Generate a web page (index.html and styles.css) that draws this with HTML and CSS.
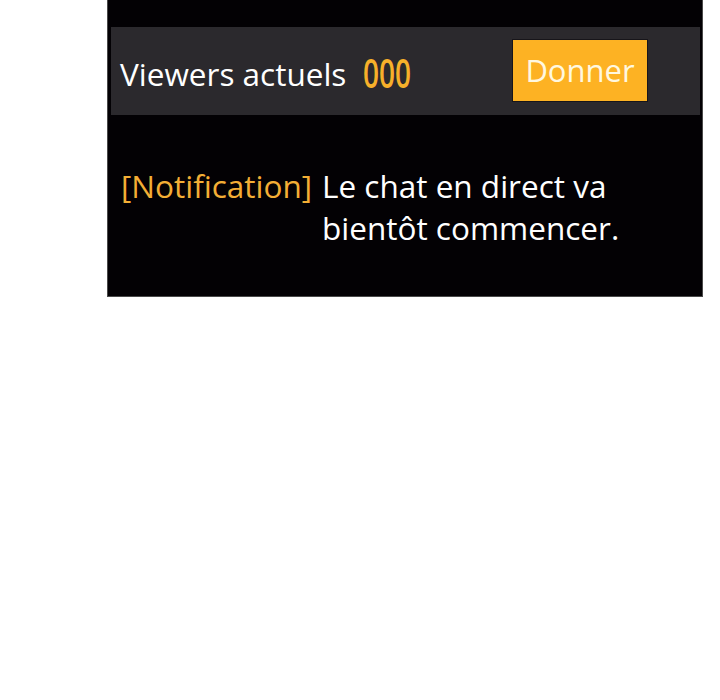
FILE: index.html
```html
<!DOCTYPE html>
<html lang="fr">
<head>
    <meta charset="UTF-8">
    <meta name="viewport" content="width=device-width, initial-scale=1.0">
    <title>Live chat</title>
    <link rel="stylesheet" href="styles.css">
</head>
<body>
    <div class="chat-panel">
        <div class="viewer-bar">
            <div class="viewer-info">
                <span class="viewer-label">Viewers actuels</span>
                <span class="viewer-count">000</span>
            </div>
            <button class="donate-btn">Donner</button>
        </div>

        <div class="notice">
            <span class="notice-tag">[Notification]</span>
            <span class="notice-text">Le chat en direct va bientôt commencer.</span>
        </div>
    </div>
</body>
</html>
```

FILE: styles.css
```css
body {
    margin: 0;
    background-color: #fff;
    font-family: 'Open Sans', 'Noto Sans', sans-serif;
}

.chat-panel {
    width: 594px;
    margin-left: 107px;
    padding: 27px 0 47px;
    background-color: #030104;
    border: 1px solid #4a4a4a;
    border-top: none;
}

.viewer-bar {
    display: flex;
    align-items: center;
    justify-content: space-between;
    height: 88px;
    margin: 0 2px 0 3px;
    padding: 0 52px 0 9px;
    background-color: #2b292d;
}

.viewer-info {
    display: flex;
    align-items: center;
    padding-top: 4px;
}

.viewer-label {
    color: #fff;
    font-size: 31.5px;
}

.viewer-count {
    display: inline-block;
    margin-left: 17px;
    color: #f7b02a;
    font-size: 40px;
    font-weight: 600;
    line-height: 1;
    transform: scaleX(0.7);
    transform-origin: left center;
}

.donate-btn {
    width: 136px;
    height: 63px;
    margin-top: -2px;
    padding: 0;
    font-family: inherit;
    font-size: 31px;
    color: #fff8e0;
    background-color: #fdb223;
    border: 1px solid #17151a;
    cursor: pointer;
}

.notice {
    display: flex;
    gap: 10px;
    margin-top: 50px;
    padding: 0 50px 0 13px;
    font-size: 31.5px;
    line-height: 42px;
}

.notice-tag {
    flex-shrink: 0;
    color: #f3ae35;
}

.notice-text {
    color: #fff;
}
```
